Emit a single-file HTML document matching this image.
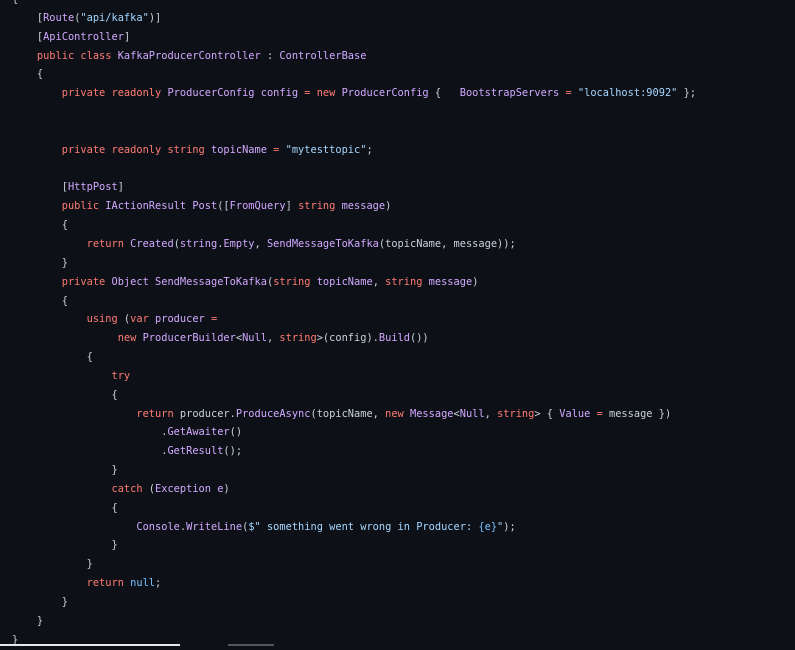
<!DOCTYPE html>
<html><head><style>
html,body{margin:0;padding:0;background:#0d1117;width:795px;height:646px;overflow:hidden}
pre{margin:0;position:absolute;left:12px;top:-10px;font-family:"DejaVu Sans Mono",monospace;font-size:10.33px;line-height:18.85px;color:#c9d1d9}
.k{color:#ff7b72}.t{color:#d2a8ff}.s{color:#a5d6ff}.n{color:#79c0ff}
.bar{position:absolute;left:0;top:644px;width:180px;height:2px;background:#e8e8e8}
.sb{position:absolute;left:228px;top:644px;width:46px;height:2px;background:#555}
</style></head><body>
<pre>{
    [<span class="t">Route</span>(<span class="s">"api/kafka"</span>)]
    [<span class="t">ApiController</span>]
    <span class="k">public class</span> <span class="t">KafkaProducerController</span> : <span class="t">ControllerBase</span>
    {
        <span class="k">private readonly</span> <span class="t">ProducerConfig</span> <span class="t">config</span> <span class="k">=</span> <span class="k">new</span> <span class="t">ProducerConfig</span> {   <span class="t">BootstrapServers</span> <span class="k">=</span> <span class="s">"localhost:9092"</span> };


        <span class="k">private readonly string</span> <span class="t">topicName</span> <span class="k">=</span> <span class="s">"mytesttopic"</span>;

        [<span class="t">HttpPost</span>]
        <span class="k">public</span> <span class="t">IActionResult</span> <span class="t">Post</span>([<span class="t">FromQuery</span>] <span class="k">string</span> <span class="t">message</span>)
        {
            <span class="k">return</span> <span class="t">Created</span>(<span class="t">string</span>.<span class="t">Empty</span>, <span class="t">SendMessageToKafka</span>(topicName, message));
        }
        <span class="k">private</span> <span class="t">Object</span> <span class="t">SendMessageToKafka</span>(<span class="k">string</span> <span class="t">topicName</span>, <span class="k">string</span> <span class="t">message</span>)
        {
            <span class="k">using</span> (<span class="k">var</span> <span class="t">producer</span> <span class="k">=</span>
                 <span class="k">new</span> <span class="t">ProducerBuilder</span>&lt;<span class="t">Null</span>, <span class="k">string</span>&gt;(config).<span class="t">Build</span>())
            {
                <span class="k">try</span>
                {
                    <span class="k">return</span> producer.<span class="t">ProduceAsync</span>(topicName, <span class="k">new</span> <span class="t">Message</span>&lt;<span class="t">Null</span>, <span class="k">string</span>&gt; { <span class="t">Value</span> <span class="k">=</span> message })
                        .<span class="t">GetAwaiter</span>()
                        .<span class="t">GetResult</span>();
                }
                <span class="k">catch</span> (<span class="t">Exception</span> <span class="t">e</span>)
                {
                    <span class="t">Console</span>.<span class="t">WriteLine</span>(<span class="s">$" something went wrong in Producer: </span><span class="n">{e}</span><span class="s">"</span>);
                }
            }
            <span class="k">return</span> <span class="n">null</span>;
        }
    }
}</pre>
<div class="bar"></div><div class="sb"></div>
</body></html>
